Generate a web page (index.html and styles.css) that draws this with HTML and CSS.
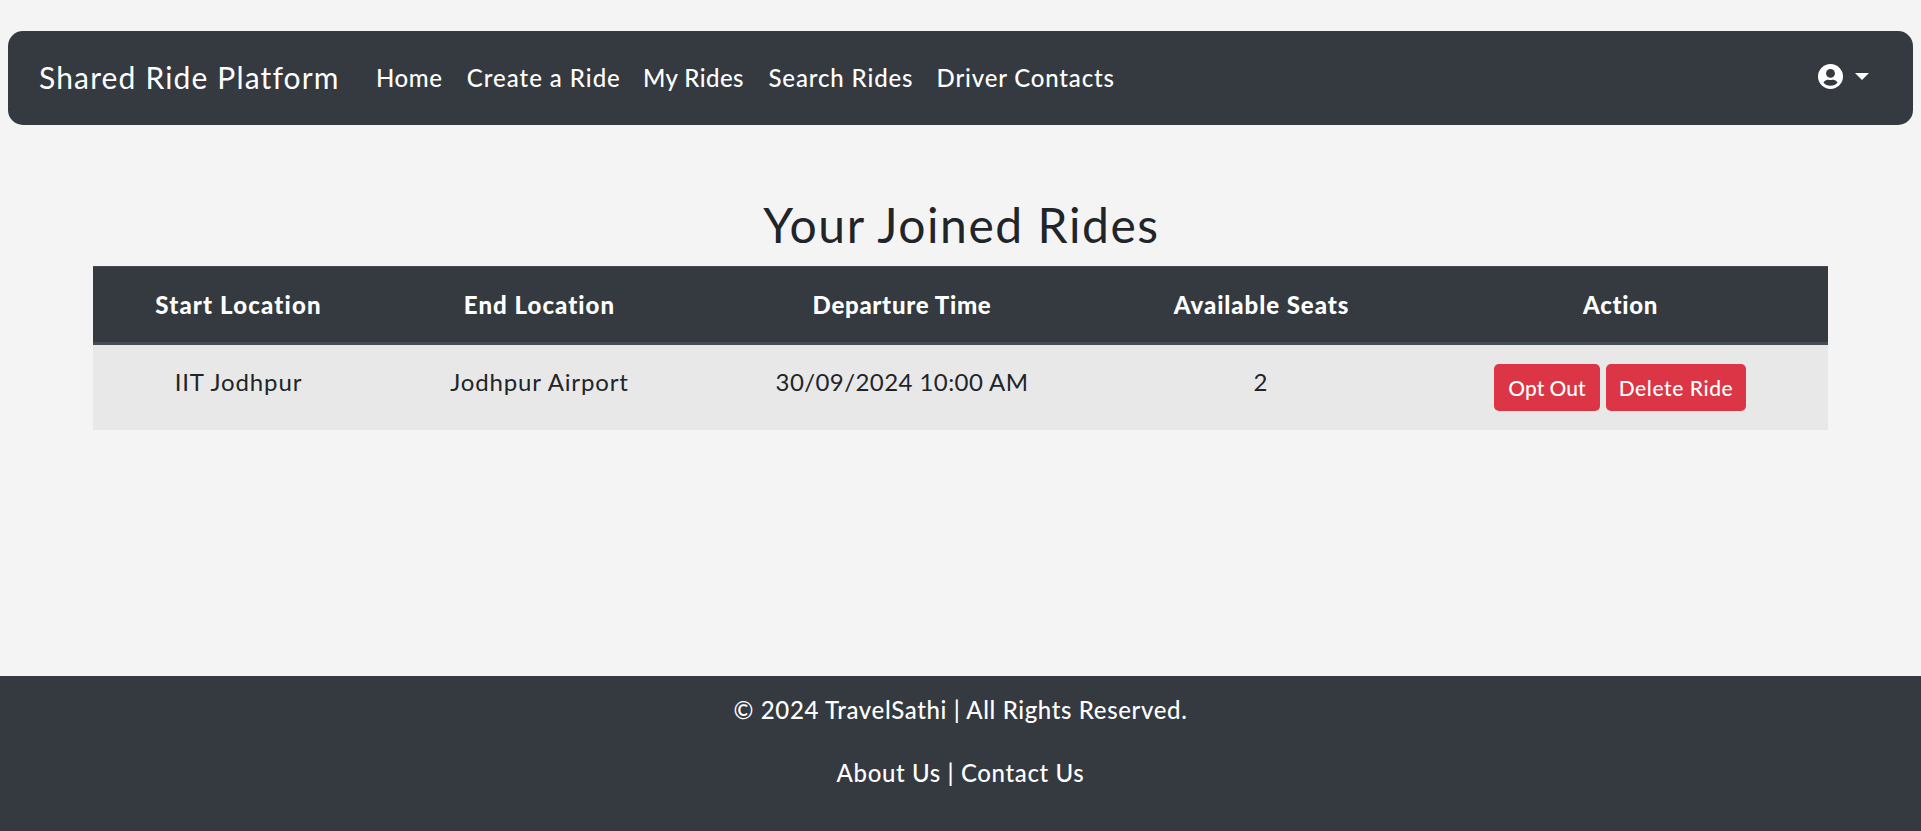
FILE: index.html
```html
<!DOCTYPE html>
<html lang="en">
<head>
<meta charset="utf-8">
<title>Shared Ride Platform</title>
<link rel="stylesheet" href="styles.css">
</head>
<body>
<nav class="navbar">
  <a class="brand">Shared Ride Platform</a>
  <div class="links">
    <a class="link home">Home</a>
    <a class="link create">Create a Ride</a>
    <a class="link mine">My Rides</a>
    <a class="link search">Search Rides</a>
    <a class="link contacts">Driver Contacts</a>
  </div>
  <a class="account">
    <svg class="avatar" viewBox="0 0 25 25"><circle cx="12.5" cy="12.5" r="12.5" fill="#fff"/><circle cx="12.5" cy="9.400" r="4.400" fill="#343a40"/><path d="M5.500 18.500C6.600 16.600 8.300 15.700 10 15.700c1 0 1.400.4 2.500.4s1.500-.4 2.500-.4c1.700 0 3.400.9 4.500 2.800C17.800 20.800 15.400 21.700 12.500 21.700S7.200 20.800 5.500 18.500Z" fill="#343a40"/></svg>
    <svg class="caret" viewBox="0 0 14 7"><path d="M0 0H14L7 7Z" fill="#fff"/></svg>
  </a>
</nav>
<main class="content">
  <h1 class="title">Your Joined Rides</h1>
  <table class="rides">
    <colgroup><col class="c1"><col class="c2"><col class="c3"><col class="c4"><col class="c5"></colgroup>
    <thead>
      <tr><th class="t-start">Start Location</th><th class="t-end">End Location</th><th class="t-time">Departure Time</th><th class="t-seats">Available Seats</th><th class="t-action">Action</th></tr>
    </thead>
    <tbody>
      <tr><td>IIT Jodhpur</td><td>Jodhpur Airport</td><td class="date">30/09/2024 10:00 AM</td><td>2</td>
      <td class="actions"><div class="buttons"><button class="btn opt">Opt Out</button><button class="btn delete">Delete Ride</button></div></td></tr>
    </tbody>
  </table>
</main>
<footer class="footer">
  <p>© 2024 TravelSathi | All Rights Reserved.</p>
  <p><a>About Us</a> | <a>Contact Us</a></p>
</footer>
</body>
</html>
```
FILE: styles.css
```css
* { box-sizing: border-box; }
body {
  margin: 0;
  height: 831px;
  padding-top: 31px;
  display: flex;
  flex-direction: column;
  overflow: hidden;
  background: #f4f4f4;
  color: #212529;
  font: 400 24px/37px Lato, "Open Sans", sans-serif;
}
.navbar {
  flex: none;
  height: 94px;
  margin: 0 8px;
  padding: 0 44px 2px 31px;
  display: flex;
  align-items: center;
  border-radius: 15px;
  background: #343a40;
  color: #fff;
  white-space: nowrap;
}
.brand { width: 337px; padding-top: 1px; font-size: 30px; letter-spacing: 1.16px; }
.links { display: flex; }
.link { font-weight: 500; }
.home { letter-spacing: .6px; }
.create { margin-left: 24.2px; letter-spacing: .98px; }
.mine { margin-left: 22.2px; letter-spacing: .44px; }
.search { margin-left: 24.5px; letter-spacing: .87px; }
.contacts { margin-left: 23.2px; letter-spacing: .83px; }
.account { margin-left: auto; display: flex; align-items: center; gap: 12px; padding-bottom: 1px; }
.avatar { width: 25px; height: 25px; }
.caret { width: 14px; height: 7px; }
.content { flex: 1; padding: 70px 93px 0; }
.title {
  margin: 0;
  height: 71px;
  padding-left: 2px;
  font-size: 48px;
  font-weight: 400;
  line-height: 60px;
  letter-spacing: 1.57px;
  text-align: center;
}
.rides { width: 1735px; table-layout: fixed; border-collapse: separate; border-spacing: 0; text-align: center; }
.c1 { width: 291px; }
.c2 { width: 311px; }
.c3 { width: 414px; }
.c4 { width: 304px; }
.c5 { width: 415px; }
th {
  height: 79px;
  padding: 0;
  background: #343a40;
  border-top: 1px solid #454d55;
  border-bottom: 3px solid #454d55;
  color: #fff;
  font-weight: 900;
}
.t-start { letter-spacing: 1.15px; }
.t-end { letter-spacing: 1.03px; }
.t-time { letter-spacing: .7px; }
.t-seats { padding-left: 1px; letter-spacing: .94px; }
.t-action { letter-spacing: .66px; }
td { height: 85px; padding: 18px 0 0; vertical-align: top; background: #e8e8e8; letter-spacing: .87px; }
.date { letter-spacing: .43px; }
.actions { padding: 19px 1px 0 0; }
.buttons { display: flex; justify-content: center; gap: 6px; }
.btn {
  height: 47px;
  padding: 0;
  border: 0;
  border-radius: 5px;
  background: #dc3545;
  color: #fff;
  font: 500 21px/47px Lato, "Open Sans", sans-serif;
}
.opt { width: 106px; }
.delete { width: 140px; letter-spacing: .6px; }
.footer {
  flex: none;
  height: 155px;
  padding-top: 15px;
  background: #343a40;
  color: #fff;
  font-weight: 500;
  letter-spacing: .63px;
  text-align: center;
}
.footer p { margin: 0 0 26px; }
```
